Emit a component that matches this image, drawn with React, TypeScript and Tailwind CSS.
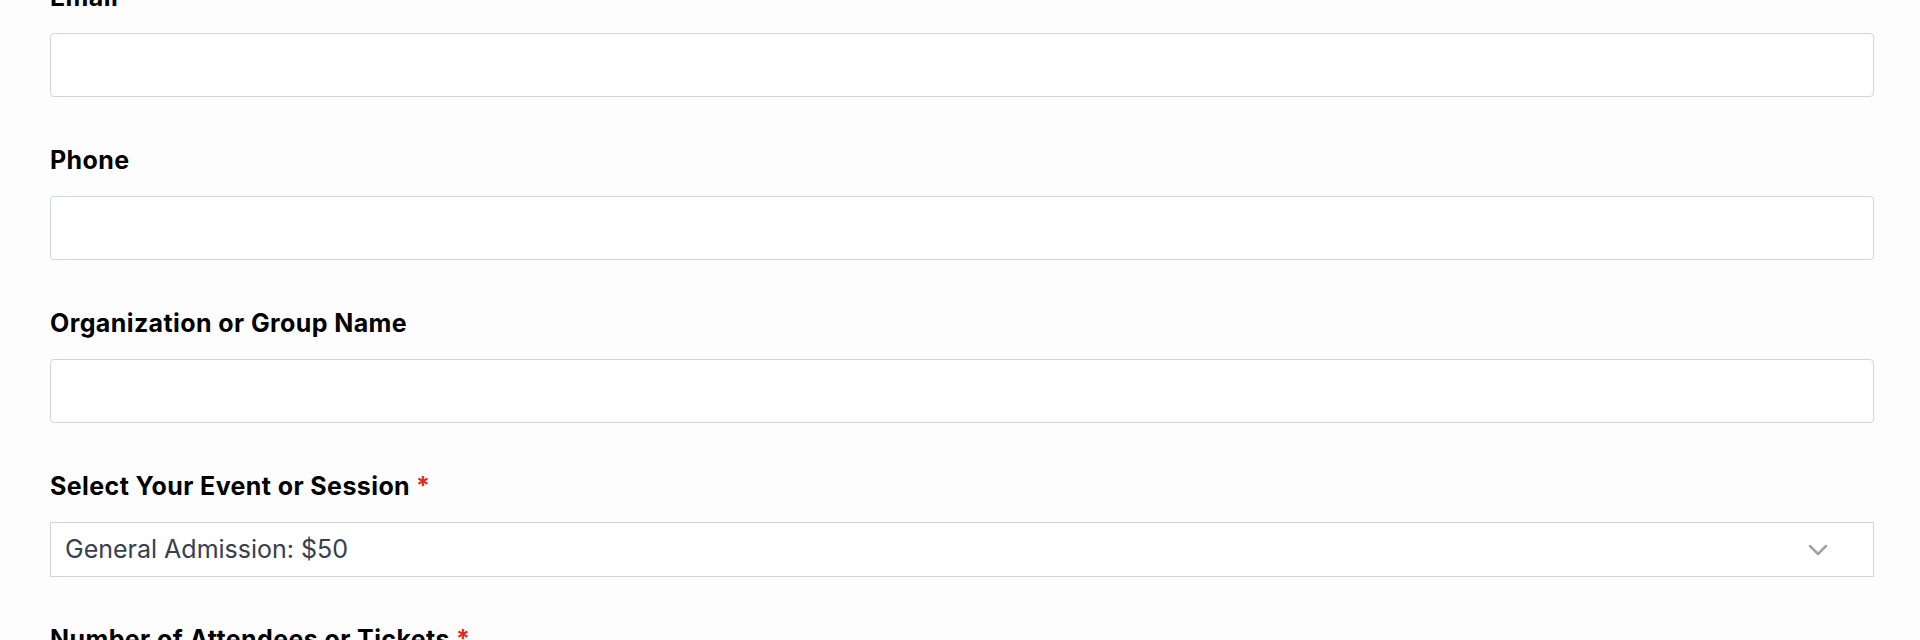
import React from 'react';

const Label = ({ text, required }: { text: string; required?: boolean }) => (
  <label className="block text-[25px] leading-[36px] font-bold tracking-[0.4px] text-black mb-[18px]">
    {text}
    {required && <span className="text-[#d92d20] ml-[6px]">*</span>}
  </label>
);

const TextField = ({ label }: { label: string }) => (
  <div className="mb-[45px]">
    <Label text={label} />
    <div className="h-[64px] w-full rounded-[4px] border border-[#cdd5e2] bg-white" />
  </div>
);

const App: React.FC = () => {
  return (
    <div className="min-h-[640px] w-full bg-[#fdfdfd] overflow-hidden" style={{ fontFamily: 'Inter, "Liberation Sans", Arial, sans-serif' }}>
      <div className="-mt-[21px] pl-[50px] pr-[46px]">
        <TextField label="Email" />
        <TextField label="Phone" />
        <TextField label="Organization or Group Name" />

        {/* Event select */}
        <div className="mb-[44px]">
          <Label text="Select Your Event or Session" required />
          <div className="h-[55px] w-full border border-[#cdd5e2] bg-white flex items-center justify-between pl-[14px] pr-[45px]">
            <span className="text-[25px] text-[#36404f]">General Admission: $50</span>
            <svg width="20" height="12" viewBox="0 0 20 12" fill="none">
              <path d="M2 2l8 8 8-8" stroke="#a3a3a3" strokeWidth="2.5" strokeLinecap="round" strokeLinejoin="round" />
            </svg>
          </div>
        </div>

        <Label text="Number of Attendees or Tickets" required />
      </div>
    </div>
  );
};

export default App;
